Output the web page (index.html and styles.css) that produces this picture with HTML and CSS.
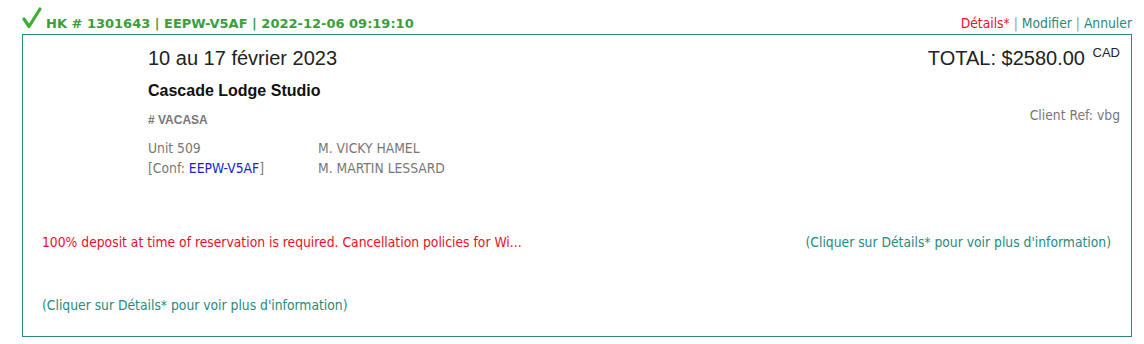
FILE: index.html
```html
<!DOCTYPE html>
<html lang="fr">
<head>
<meta charset="utf-8">
<link rel="stylesheet" href="styles.css">
</head>
<body>
<div class="page">
  <div class="head">
    <div class="head-left">
      <svg class="check" width="20" height="22" viewBox="0 0 20 22"><path d="M2 12 L7 19.5 L18 2" fill="none" stroke="#3cb034" stroke-width="3.2" stroke-linecap="round" stroke-linejoin="round"/></svg>
      <span class="ref">HK # 1301643 | EEPW-V5AF | 2022-12-06 09:19:10</span>
    </div>
    <div class="actions">
      <a class="red">Détails*</a> <span class="sep">|</span> <a class="teal">Modifier</a> <span class="sep">|</span> <a class="teal">Annuler</a>
    </div>
  </div>
  <div class="box">
    <div class="top">
      <div class="info">
        <div class="date">10 au 17 février 2023</div>
        <div class="name">Cascade Lodge Studio</div>
        <div class="vendor"># VACASA</div>
        <div class="grid">
          <div>Unit 509</div>
          <div>M. VICKY HAMEL</div>
          <div>[Conf: <span class="blue">EEPW-V5AF</span>]</div>
          <div>M. MARTIN LESSARD</div>
        </div>
      </div>
      <div class="right">
        <div class="total">TOTAL: $2580.00 <sup>CAD</sup></div>
        <div class="client">Client Ref: vbg</div>
      </div>
    </div>
    <div class="policy">
      <span class="red">100% deposit at time of reservation is required. Cancellation policies for Wi...</span>
      <span class="teal">(Cliquer sur Détails* pour voir plus d'information)</span>
    </div>
    <div class="more teal">(Cliquer sur Détails* pour voir plus d'information)</div>
  </div>
</div>
</body>
</html>
```

FILE: styles.css
```css
html, body { margin: 0; padding: 0; background: #fff; }
body { font-family: "DejaVu Sans Condensed", "DejaVu Sans", sans-serif; font-size: 13.75px; color: #777; }
.page { width: 1110px; padding-left: 22px; }
.head { height: 34px; display: flex; justify-content: space-between; align-items: flex-end; box-sizing: border-box; padding-bottom: 2px; }
.head-left { display: flex; align-items: flex-end; }
.check { display: block; margin-right: 4px; margin-bottom: 3px; }
.ref { font-family: "DejaVu Sans", sans-serif; font-weight: bold; color: #3a9e3a; font-size: 13px; line-height: 16px; }
.actions { line-height: 16px; padding-bottom: 1px; color: #888; }
.actions a { text-decoration: none; }
.red { color: #e8101e; }
.teal { color: #268a80; }
.blue { color: #1c1cc8; }
.sep { color: #999; }
.box { border: 1px solid #268a80; height: 303px; box-sizing: border-box; padding: 11px 11px 0 19px; }
.top { display: flex; justify-content: space-between; }
.info { margin-left: 106px; }
.date { font-family: "Liberation Sans", Arial, sans-serif; font-size: 20px; color: #222; line-height: 24px; }
.name { font-family: "Liberation Sans", Arial, sans-serif; font-size: 16px; font-weight: bold; color: #111; margin-top: 12px; line-height: 18px; }
.vendor { font-family: "Liberation Sans", Arial, sans-serif; font-size: 12px; font-weight: bold; color: #777; margin-top: 13px; line-height: 14px; }
.grid { display: grid; grid-template-columns: 170px auto; row-gap: 3px; margin-top: 13px; line-height: 17px; }
.right { text-align: right; }
.total { font-family: "Liberation Sans", Arial, sans-serif; font-size: 20px; color: #222; line-height: 24px; }
.total sup { font-size: 13px; vertical-align: 0; position: relative; top: -8px; margin-left: 2px; }
.client { margin-top: 34px; line-height: 16px; }
.policy { display: flex; justify-content: space-between; margin-top: 57px; padding-right: 9px; line-height: 16px; }
.more { margin-top: 47px; line-height: 16px; }
```
